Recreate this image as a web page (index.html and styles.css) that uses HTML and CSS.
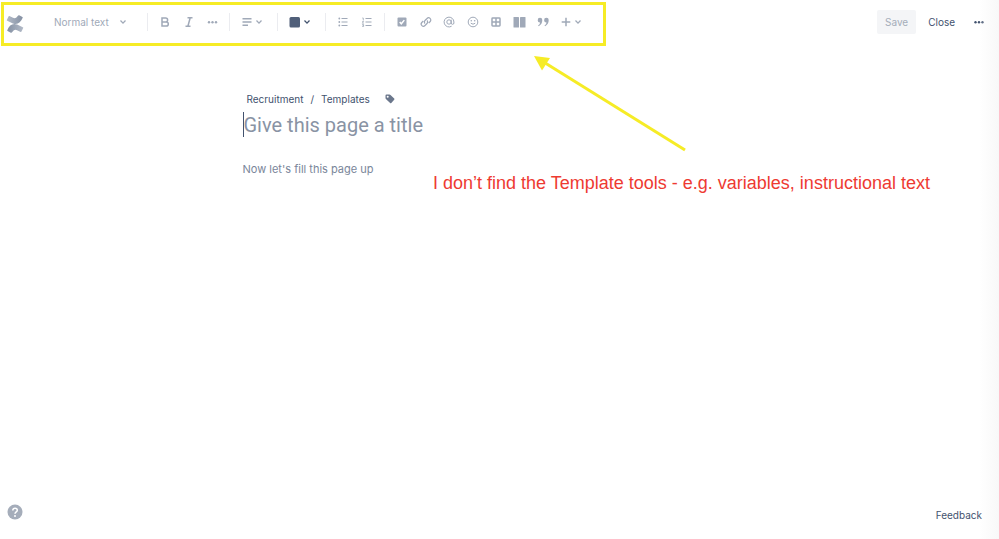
FILE: index.html
```html
<!DOCTYPE html>
<html lang="en">
<head>
<meta charset="utf-8">
<meta name="viewport" content="width=device-width, initial-scale=1">
<title>Edit template</title>
<link rel="stylesheet" href="styles.css">
</head>
<body>
<header class="topbar">
  <a class="logo" href="#" aria-label="Confluence">
    <svg width="18" height="18" viewBox="0 0 18 18">
      <defs>
        <linearGradient id="up" x1="0" y1="0" x2="1" y2="0"><stop offset="0" stop-color="#8490a3"/><stop offset="1" stop-color="#b3bbc8"/></linearGradient>
        <linearGradient id="down" x1="0" y1="0" x2="1" y2="0"><stop offset="0" stop-color="#b3bbc8"/><stop offset="1" stop-color="#8490a3"/></linearGradient>
      </defs>
      <path fill="url(#down)" d="M.8 4.900 2.500 1.400Q2.800.8 3.400 1.100L7 2.800Q9.700 4 11.500 1.200L12.200.5Q12.600 0 13.200.3L16.400 1.900Q17 2.200 16.700 2.800C14.700 7.800 11.300 10 6.900 8.400L1.200 5.700Q.6 5.400.8 4.900Z"/>
      <path fill="url(#up)" d="M17.200 13.100 15.500 16.600Q15.200 17.200 14.600 16.900L11 15.200Q8.300 14 6.500 16.800L5.800 17.500Q5.400 18 4.800 17.700L1.600 16.100Q1 15.800 1.300 15.200C3.300 10.200 6.700 8 11.100 9.600L16.800 12.300Q17.400 12.600 17.200 13.100Z"/>
    </svg>
  </a>
  <div class="toolbar" role="toolbar" aria-label="Formatting">
    <div class="group style-group">
      <select class="style-select" aria-label="Text style"><option>Normal text</option><option>Heading 1</option></select>
      <svg class="chevron" width="8" height="8" viewBox="0 0 8 8"><path d="m1.500 2.500 2.500 2.600 2.500-2.600"/></svg>
    </div>
    <div class="group marks">
      <button type="button" class="tool" aria-label="Bold"><svg viewBox="0 0 16 16"><path class="line" d="M5 3.900h3.600a2 2 0 0 1 0 4H5zM5 7.900h4.200a2.100 2.100 0 0 1 0 4.200H5z"/></svg></button>
      <button type="button" class="tool" aria-label="Italic"><svg viewBox="0 0 16 16"><path class="line" d="M6.500 3.800h5M4.500 12.200h5M9.200 3.800l-2.300 8.400"/></svg></button>
      <button type="button" class="tool" aria-label="More formatting"><svg viewBox="0 0 16 16"><circle cx="4" cy="8.300" r="1.200"/><circle cx="7.500" cy="8.300" r="1.200"/><circle cx="11" cy="8.300" r="1.200"/></svg></button>
    </div>
    <div class="group">
      <button type="button" class="tool menu" aria-label="Alignment"><svg viewBox="0 0 16 16"><path class="line" d="M3.500 4.700h9M3.500 8h9M3.500 11.300h5.500"/></svg><svg class="chevron" viewBox="0 0 8 8"><path d="m1.500 2.500 2.500 2.600 2.500-2.600"/></svg></button>
    </div>
    <div class="group">
      <button type="button" class="tool menu color" aria-label="Text color"><svg viewBox="0 0 16 16"><rect x="2.500" y="3" width="10.500" height="10.500" rx="1.500"/></svg><svg class="chevron" viewBox="0 0 8 8"><path d="m1.500 2.500 2.500 2.600 2.500-2.600"/></svg></button>
    </div>
    <div class="group lists">
      <button type="button" class="tool" aria-label="Bullet list"><svg viewBox="0 0 16 16"><path class="line mid" d="M6.500 4.500h6M6.500 8h6M6.500 11.500h6"/><circle cx="4.300" cy="4.500" r=".9"/><circle cx="4.300" cy="8" r=".9"/><circle cx="4.300" cy="11.500" r=".9"/></svg></button>
      <button type="button" class="tool" aria-label="Numbered list"><svg viewBox="0 0 16 16"><path class="line mid" d="M6.500 4.500h6M6.500 8h6M6.500 11.500h6"/><path class="line fine" d="M3.300 4h1v2.500M3.200 7.500h1.400L3.300 9.200h1.500M3.200 10.500h1.400v2H3.200m.4-1h1"/></svg></button>
    </div>
    <div class="group inserts">
      <div class="icons">
        <button type="button" class="tool" aria-label="Action item"><svg viewBox="0 0 16 16"><rect x="3.500" y="3.500" width="9" height="9" rx="1"/><path class="line knock" d="m5.700 8 1.600 1.800 3-3.700"/></svg></button>
        <button type="button" class="tool" aria-label="Link"><svg viewBox="0 0 16 16"><path class="line mid" d="M7 9.500a2.100 2.100 0 0 1 0-3l2-2a2.100 2.100 0 0 1 3.200 3l-1.500 1.500M9 6.500a2.100 2.100 0 0 1 0 3l-2 2a2.100 2.100 0 0 1-3.200-3L5.300 7"/></svg></button>
        <button type="button" class="tool" aria-label="Mention"><svg viewBox="0 0 16 16"><circle class="line thin" cx="8" cy="8" r="2.200"/><path class="line thin" d="M10.200 5.700V9a1.350 1.350 0 0 0 2.700 0V8a4.900 4.900 0 1 0-2.300 4.200"/></svg></button>
        <button type="button" class="tool" aria-label="Emoji"><svg viewBox="0 0 16 16"><circle class="line thin" cx="8" cy="8" r="4.800"/><circle cx="6.300" cy="6.700" r=".8"/><circle cx="9.700" cy="6.700" r=".8"/><path class="line thin" d="M5.800 9.200q2.200 2 4.400 0"/></svg></button>
        <button type="button" class="tool" aria-label="Table"><svg viewBox="0 0 16 16"><rect class="line" x="4" y="4" width="8" height="8" rx=".7"/><path class="line" d="M8 4v8M4 8h8"/></svg></button>
        <button type="button" class="tool" aria-label="Layouts"><svg viewBox="0 0 16 16"><rect x="1.500" y="3" width="5.500" height="10.500" rx=".6"/><rect x="8" y="3" width="5.500" height="10.500" rx=".6"/></svg></button>
        <button type="button" class="tool" aria-label="Quote"><svg viewBox="0 0 16 16"><path d="M7.300 6.100c0 3-1.200 4.900-3.600 6.200l-.6-.8c1.300-1 1.900-1.900 2-3.100A2.300 2.300 0 1 1 7.300 6.100ZM13.700 6.100c0 3-1.200 4.900-3.600 6.200l-.6-.8c1.300-1 1.900-1.900 2-3.100A2.300 2.300 0 1 1 13.700 6.100Z"/></svg></button>
      </div>
      <button type="button" class="tool menu" aria-label="Insert"><svg viewBox="0 0 16 16"><path class="line" d="M8 3.700v8.600M3.700 8h8.600"/></svg><svg class="chevron" viewBox="0 0 8 8"><path d="m1.500 2.500 2.500 2.600 2.500-2.600"/></svg></button>
    </div>
  </div>
  <div class="actions">
    <button type="button" class="save" disabled>Save</button>
    <button type="button" class="close">Close</button>
    <button type="button" class="tool more" aria-label="More actions"><svg viewBox="0 0 16 16"><circle cx="4.500" cy="8.200" r="1.200"/><circle cx="8" cy="8.200" r="1.200"/><circle cx="11.500" cy="8.200" r="1.200"/></svg></button>
  </div>
</header>

<main class="editor">
  <nav class="crumbs" aria-label="Breadcrumb">
    <a href="#">Recruitment</a><span>/</span><a href="#">Templates</a>
    <button type="button" class="tag" aria-label="Labels"><svg width="10" height="10" viewBox="0 0 10 10"><path fill-rule="evenodd" d="M.5 1.500q0-1 1-1h3q.6 0 1 .4l3.700 3.700q.6.6 0 1.200L6.300 8.900q-.6.6-1.200 0L.9 4.900q-.4-.4-.4-1ZM2.700 1.700a1 1 0 1 0 0 2 1 1 0 0 0 0-2Z"/></svg></button>
  </nav>
  <div class="title-row">
    <input class="title" type="text" aria-label="Page title" placeholder="Give this page a title">
  </div>
  <p class="body-hint">Now let's fill this page up</p>
</main>

<footer class="footer">
  <button type="button" class="help" aria-label="Help"><svg width="16" height="16" viewBox="0 0 16 16"><circle cx="8" cy="8" r="7.500"/><path class="line knock" d="M5.800 6.400c0-3 4.500-2.800 4.500-.2C10.300 7.900 8 7.700 8 9.700"/><circle class="dot" cx="8" cy="12" r="1"/></svg></button>
  <a class="feedback" href="#">Feedback</a>
</footer>

<div class="callout-box"></div>
<svg class="callout-arrow" width="156" height="98" viewBox="0 0 156 98"><path d="M8 5 151 94" fill="none" stroke="#f6ec26" stroke-width="3"/><path d="M0 0 16 2 8 14.500Z" fill="#f6ec26"/></svg>
<p class="callout-text">I don’t find the Template tools - e.g. variables, instructional text</p>
</body>
</html>
```
FILE: styles.css
```css
* {
  box-sizing: border-box;
}

body {
  margin: 0;
  min-height: 100vh;
  display: flex;
  flex-direction: column;
  position: relative;
  background: #fff;
  color: #42526e;
  font: 10px/16px Inter, sans-serif;
}

/* soft shade along the right edge of the window */
body::after {
  content: "";
  position: absolute;
  inset: 0 0 0 auto;
  width: 20px;
  background: linear-gradient(to right, #fff0, #f8f8f8);
  pointer-events: none;
}

button,
select,
input {
  margin: 0;
  padding: 0;
  border: 0;
  background: none;
  color: inherit;
  font: inherit;
}

a {
  color: inherit;
  text-decoration: none;
}

svg {
  display: block;
  flex: none;
  fill: currentColor;
}

.line {
  fill: none;
  stroke: currentColor;
  stroke-width: 1.5px;
}

.mid {
  stroke-width: 1.2px;
}

.thin {
  stroke-width: 1px;
}

.fine {
  stroke-width: 0.8px;
}

.knock {
  stroke: #fff;
}

.dot {
  fill: #fff;
}

.topbar {
  display: flex;
  align-items: center;
  height: 44px;
  padding: 0 12px 0 6px;
}

.logo {
  width: 48px;
  padding-top: 4px;
}

.toolbar {
  display: flex;
  color: #a0a9b8;
}

.group {
  display: flex;
  align-items: center;
  height: 18px;
  padding: 0 9px;
  border-left: 1px solid #ebecf0;
}

.style-group {
  width: 93px;
  padding: 0;
  border-left: 0;
}

.style-select {
  appearance: none;
  width: 65px;
}

.chevron,
.tool .chevron {
  width: 8px;
  height: 8px;
  fill: none;
  stroke: currentColor;
  stroke-width: 1.3px;
}

.marks,
.lists {
  gap: 8px;
}

.marks {
  width: 82px;
}

.tool {
  display: flex;
  align-items: center;
}

.tool svg {
  width: 16px;
  height: 16px;
}

.menu {
  width: 29px;
}

.color {
  color: #42526e;
}

.color svg:first-child {
  color: #505f79;
}

.icons {
  display: flex;
  justify-content: space-between;
  width: 157px;
  margin-right: 7px;
}

.actions {
  display: flex;
  align-items: center;
  margin-left: auto;
}

.save {
  height: 24px;
  padding: 0 8px;
  border-radius: 2px;
  background: #f4f5f7;
  color: #a5adba;
}

.close {
  margin: 0 16px 0 12px;
}

.editor {
  flex: 1;
  width: 514px;
  max-width: 100%;
  margin: 47px auto 0;
}

.crumbs {
  display: flex;
  align-items: center;
  gap: 7px;
  padding-left: 4px;
}

.tag {
  margin-left: 8px;
  color: #6b778c;
}

.title-row {
  margin-top: 5px;
  border-left: 1px solid #42526e;
}

.title {
  display: block;
  width: 100%;
  height: 25px;
  font-family: Roboto, sans-serif;
  font-size: 20px;
}

.title::placeholder {
  color: #8993a4;
  opacity: 1;
}

.body-hint {
  margin: 24px 0 0;
  color: #7a869a;
  font-size: 11px;
}

.footer {
  display: flex;
  align-items: flex-end;
  justify-content: space-between;
  padding: 0 17px 16px 7px;
}

.help {
  padding-bottom: 3px;
  color: #a5adba;
}

.callout-box {
  position: absolute;
  top: 2px;
  left: 1px;
  width: 605px;
  height: 44px;
  border: 3px solid #f6ec26;
  pointer-events: none;
}

.callout-arrow {
  position: absolute;
  top: 56px;
  left: 534px;
  pointer-events: none;
}

.callout-text {
  position: absolute;
  top: 172px;
  left: 433px;
  margin: 0;
  color: #ee3a32;
  font: 18px/22px "Liberation Sans", sans-serif;
  white-space: nowrap;
}
```
